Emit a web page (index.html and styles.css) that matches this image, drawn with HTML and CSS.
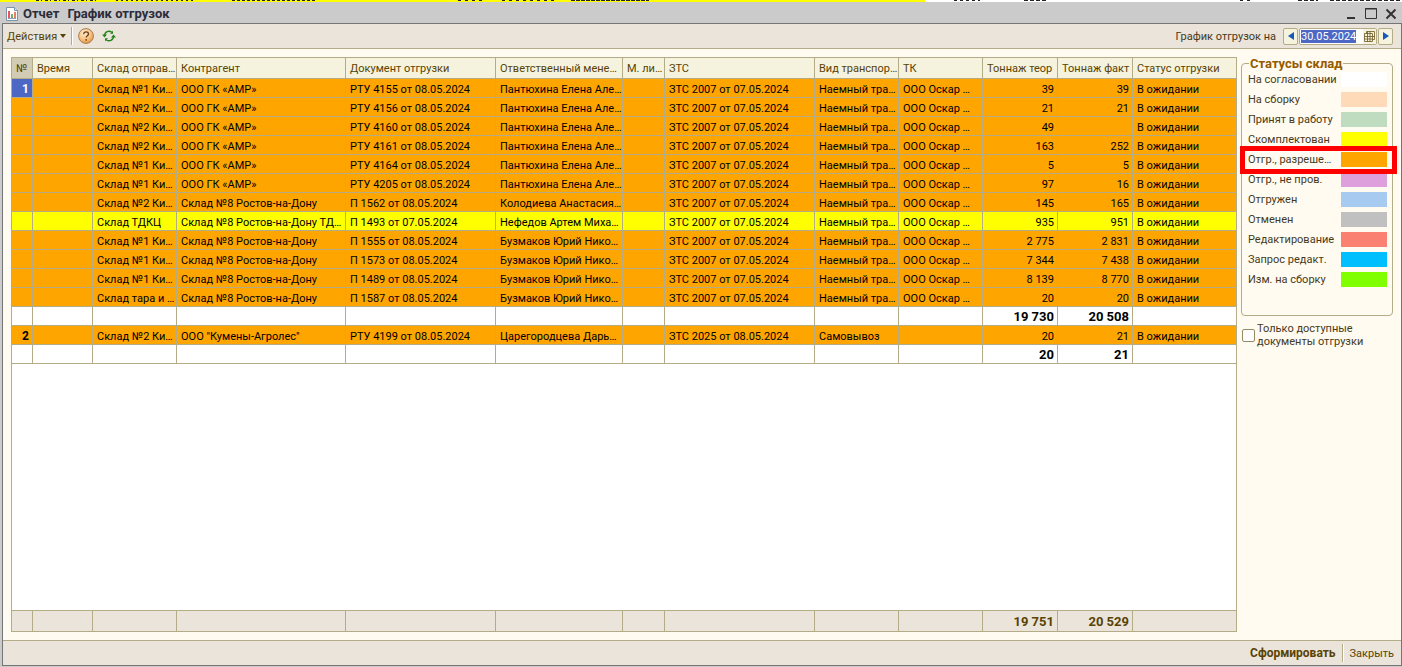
FILE: index.html
```html
<!DOCTYPE html>
<html lang="ru">
<head>
    <meta charset="UTF-8">
    <meta name="viewport" content="width=device-width, initial-scale=1.0">
    <title>Отчет График отгрузок</title>
    <link rel="stylesheet" href="styles.css">
</head>
<body>
    <div class="backdrop"></div>
    <header class="titlebar">
        <svg class="report-icon" width="12" height="14" viewBox="0 0 12 14">
            <path d="M.5.5h8l3 3v10H.5z" fill="#fff" stroke="#7d95a8"/>
            <path d="M8.500.5v3h3" fill="#dbe6ee" stroke="#7d95a8"/>
            <path d="M3 4v7" stroke="#e02020" stroke-width="1.500"/>
            <path d="M6 7v4" stroke="#3a9a3a" stroke-width="1.500"/>
            <path d="M9 5v6" stroke="#e05030" stroke-width="1.500"/>
            <path d="M2 11.500h8" stroke="#8fa0c0"/>
        </svg>
        <h1><span>Отчет</span> <span>График отгрузок</span></h1>
        <div class="window-buttons">
            <button type="button" aria-label="Свернуть"><svg width="12" height="12" viewBox="0 0 12 12"><path d="M2 10h8" stroke="#333" stroke-width="2"/></svg></button>
            <button type="button" aria-label="Развернуть"><svg width="12" height="12" viewBox="0 0 12 12"><path d="M.5.5h11v10H.5z" fill="none" stroke="#333"/><path d="M0 1h12" stroke="#333" stroke-width="1"/></svg></button>
            <button type="button" aria-label="Закрыть окно"><svg width="12" height="12" viewBox="0 0 12 12"><path d="M1.500 1.500l9 9M10.500 1.500l-9 9" stroke="#333" stroke-width="2"/></svg></button>
        </div>
    </header>
    <div class="window">
        <div class="toolbar">
            <button type="button" class="actions">Действия <svg width="6" height="4" viewBox="0 0 6 4"><path d="M0 0h6L3 4z" fill="#594304"/></svg></button>
            <span class="separator"></span>
            <button type="button" class="icon-button" aria-label="Справка">
                <svg width="16" height="16" viewBox="0 0 16 16">
                    <defs><radialGradient id="help" cx=".4" cy=".3" r=".8"><stop offset="0" stop-color="#fff0d8"/><stop offset=".6" stop-color="#f6bd78"/><stop offset="1" stop-color="#e08a30"/></radialGradient></defs>
                    <circle cx="8" cy="8" r="7.400" fill="url(#help)" stroke="#a67c50"/>
                    <path d="M5.700 6.300c0-3.200 4.800-3.200 4.800-.3 0 1.700-2.400 1.700-2.400 3.600M8.100 11v1.700" fill="none" stroke="#704010" stroke-width="1.300"/>
                </svg>
            </button>
            <button type="button" class="icon-button" aria-label="Обновить">
                <svg width="14" height="12" viewBox="0 0 14 12">
                    <path d="M2.500 6C2.500 1.500 7 .2 9.800 2.300M11.500 6c0 4.500-4.500 5.800-7.300 3.700" fill="none" stroke="#23831d" stroke-width="1.400"/>
                    <path d="M0 4.500h5L2.500 7.500zM9 7.500h5l-2.500-3zM8 3.800h3V.8zM6 8.200H3v3z" fill="#23831d"/>
                </svg>
            </button>
            <label class="date-label" for="date">График отгрузок на</label>
            <div class="date-picker">
                <button type="button" aria-label="Предыдущий день"><svg width="6" height="8" viewBox="0 0 6 8"><path d="M6 0v8L0 4z" fill="#1858b8"/></svg></button>
                <div class="date-field">
                    <input type="text" id="date" value="30.05.2024">
                    <button type="button" aria-label="Календарь"><svg width="11" height="11" viewBox="0 0 11 11"><path d="M2.500.5h8v8h-2M.5 2.500h8v8h-8zM.5 5.500h10M.5 8h8M3.500.5v10M6 .5v10M2.500.5v2" fill="none" stroke="#6b5720" stroke-width=".8"/></svg></button>
                </div>
                <button type="button" aria-label="Следующий день"><svg width="6" height="8" viewBox="0 0 6 8"><path d="M0 0v8l6-4z" fill="#1858b8"/></svg></button>
            </div>
        </div>
        <main class="content">
            <table class="report">
                <colgroup>
                    <col class="c-num"><col class="c-time"><col class="c-store"><col class="c-partner"><col class="c-doc"><col class="c-manager"><col class="c-sheet"><col class="c-zts"><col class="c-transport"><col class="c-tk"><col class="c-ton"><col class="c-ton"><col class="c-status">
                </colgroup>
                <thead>
                    <tr><th>№</th><th>Время</th><th>Склад отправ…</th><th>Контрагент</th><th>Документ отгрузки</th><th>Ответственный мене…</th><th>М. ли…</th><th>ЗТС</th><th>Вид транспор…</th><th>ТК</th><th>Тоннаж теор</th><th>Тоннаж факт</th><th>Статус отгрузки</th></tr>
                </thead>
                <tbody>
                    <tr class="allowed"><td class="selected">1</td><td></td><td>Склад №1 Ки…</td><td>ООО ГК «АМР»</td><td>РТУ 4155 от 08.05.2024</td><td>Пантюхина Елена Але…</td><td></td><td>ЗТС 2007 от 07.05.2024</td><td>Наемный тра…</td><td>ООО Оскар …</td><td>39</td><td>39</td><td>В ожидании</td></tr>
                    <tr class="allowed"><td></td><td></td><td>Склад №2 Ки…</td><td>ООО ГК «АМР»</td><td>РТУ 4156 от 08.05.2024</td><td>Пантюхина Елена Але…</td><td></td><td>ЗТС 2007 от 07.05.2024</td><td>Наемный тра…</td><td>ООО Оскар …</td><td>21</td><td>21</td><td>В ожидании</td></tr>
                    <tr class="allowed"><td></td><td></td><td>Склад №2 Ки…</td><td>ООО ГК «АМР»</td><td>РТУ 4160 от 08.05.2024</td><td>Пантюхина Елена Але…</td><td></td><td>ЗТС 2007 от 07.05.2024</td><td>Наемный тра…</td><td>ООО Оскар …</td><td>49</td><td></td><td>В ожидании</td></tr>
                    <tr class="allowed"><td></td><td></td><td>Склад №2 Ки…</td><td>ООО ГК «АМР»</td><td>РТУ 4161 от 08.05.2024</td><td>Пантюхина Елена Але…</td><td></td><td>ЗТС 2007 от 07.05.2024</td><td>Наемный тра…</td><td>ООО Оскар …</td><td>163</td><td>252</td><td>В ожидании</td></tr>
                    <tr class="allowed"><td></td><td></td><td>Склад №1 Ки…</td><td>ООО ГК «АМР»</td><td>РТУ 4164 от 08.05.2024</td><td>Пантюхина Елена Але…</td><td></td><td>ЗТС 2007 от 07.05.2024</td><td>Наемный тра…</td><td>ООО Оскар …</td><td>5</td><td>5</td><td>В ожидании</td></tr>
                    <tr class="allowed"><td></td><td></td><td>Склад №1 Ки…</td><td>ООО ГК «АМР»</td><td>РТУ 4205 от 08.05.2024</td><td>Пантюхина Елена Але…</td><td></td><td>ЗТС 2007 от 07.05.2024</td><td>Наемный тра…</td><td>ООО Оскар …</td><td>97</td><td>16</td><td>В ожидании</td></tr>
                    <tr class="allowed"><td></td><td></td><td>Склад №2 Ки…</td><td>Склад №8 Ростов-на-Дону</td><td>П 1562 от 08.05.2024</td><td>Колодиева Анастасия…</td><td></td><td>ЗТС 2007 от 07.05.2024</td><td>Наемный тра…</td><td>ООО Оскар …</td><td>145</td><td>165</td><td>В ожидании</td></tr>
                    <tr class="complete"><td></td><td></td><td>Склад ТДКЦ</td><td>Склад №8 Ростов-на-Дону ТД…</td><td>П 1493 от 07.05.2024</td><td>Нефедов Артем Миха…</td><td></td><td>ЗТС 2007 от 07.05.2024</td><td>Наемный тра…</td><td>ООО Оскар …</td><td>935</td><td>951</td><td>В ожидании</td></tr>
                    <tr class="allowed"><td></td><td></td><td>Склад №1 Ки…</td><td>Склад №8 Ростов-на-Дону</td><td>П 1555 от 08.05.2024</td><td>Бузмаков Юрий Нико…</td><td></td><td>ЗТС 2007 от 07.05.2024</td><td>Наемный тра…</td><td>ООО Оскар …</td><td>2 775</td><td>2 831</td><td>В ожидании</td></tr>
                    <tr class="allowed"><td></td><td></td><td>Склад №1 Ки…</td><td>Склад №8 Ростов-на-Дону</td><td>П 1573 от 08.05.2024</td><td>Бузмаков Юрий Нико…</td><td></td><td>ЗТС 2007 от 07.05.2024</td><td>Наемный тра…</td><td>ООО Оскар …</td><td>7 344</td><td>7 438</td><td>В ожидании</td></tr>
                    <tr class="allowed"><td></td><td></td><td>Склад №1 Ки…</td><td>Склад №8 Ростов-на-Дону</td><td>П 1489 от 08.05.2024</td><td>Бузмаков Юрий Нико…</td><td></td><td>ЗТС 2007 от 07.05.2024</td><td>Наемный тра…</td><td>ООО Оскар …</td><td>8 139</td><td>8 770</td><td>В ожидании</td></tr>
                    <tr class="allowed"><td></td><td></td><td>Склад тара и …</td><td>Склад №8 Ростов-на-Дону</td><td>П 1587 от 08.05.2024</td><td>Бузмаков Юрий Нико…</td><td></td><td>ЗТС 2007 от 07.05.2024</td><td>Наемный тра…</td><td>ООО Оскар …</td><td>20</td><td>20</td><td>В ожидании</td></tr>
                    <tr class="subtotal"><td></td><td></td><td></td><td></td><td></td><td></td><td></td><td></td><td></td><td></td><td>19 730</td><td>20 508</td><td></td></tr>
                    <tr class="allowed"><td>2</td><td></td><td>Склад №2 Ки…</td><td>ООО "Кумены-Агролес"</td><td>РТУ 4199 от 08.05.2024</td><td>Царегородцева Дарь…</td><td></td><td>ЗТС 2025 от 08.05.2024</td><td>Самовывоз</td><td></td><td>20</td><td>21</td><td>В ожидании</td></tr>
                    <tr class="subtotal"><td></td><td></td><td></td><td></td><td></td><td></td><td></td><td></td><td></td><td></td><td>20</td><td>21</td><td></td></tr>
                    <tr class="filler"><td colspan="13"></td></tr>
                </tbody>
                <tfoot>
                    <tr><td></td><td></td><td></td><td></td><td></td><td></td><td></td><td></td><td></td><td></td><td>19 751</td><td>20 529</td><td></td></tr>
                </tfoot>
            </table>
            <aside class="side">
                <fieldset class="statuses">
                    <legend>Статусы склад</legend>
                    <ul>
                        <li>На согласовании<span class="swatch agree"></span></li>
                        <li>На сборку<span class="swatch assembly"></span></li>
                        <li>Принят в работу<span class="swatch accepted"></span></li>
                        <li>Скомплектован<span class="swatch complete"></span></li>
                        <li class="marked">Отгр., разреше…<span class="swatch allowed"></span></li>
                        <li>Отгр., не пров.<span class="swatch unposted"></span></li>
                        <li>Отгружен<span class="swatch shipped"></span></li>
                        <li>Отменен<span class="swatch cancelled"></span></li>
                        <li>Редактирование<span class="swatch editing"></span></li>
                        <li>Запрос редакт.<span class="swatch request"></span></li>
                        <li>Изм. на сборку<span class="swatch changed"></span></li>
                    </ul>
                </fieldset>
                <div class="only-available">
                    <input type="checkbox" id="available">
                    <label for="available">Только доступные документы отгрузки</label>
                </div>
            </aside>
        </main>
        <footer class="commands">
            <button type="button" class="primary">Сформировать</button>
            <span class="separator"></span>
            <button type="button">Закрыть</button>
        </footer>
    </div>
</body>
</html>
```
FILE: styles.css
```css
* {
    box-sizing: border-box;
}
body {
    margin: 0;
    min-height: 100vh;
    display: flex;
    flex-direction: column;
    background: #cbcbcb;
    font-family: Roboto, "Liberation Sans", sans-serif;
    font-size: 11px;
    line-height: 13px;
    color: #46391a;
}
button {
    display: flex;
    align-items: center;
    justify-content: center;
    margin: 0;
    padding: 0;
    border: 0;
    background: none;
    font: inherit;
    color: #594304;
}

/* edge of the window behind */
.backdrop {
    height: 2px;
    background:
        repeating-linear-gradient(90deg, #222 0 3px, transparent 3px 5px, #222 5px 6px, transparent 6px 9px) 36px 0 / 60px 1px no-repeat,
        repeating-linear-gradient(90deg, #222 0 2px, transparent 2px 5px) 116px 0 / 78px 1px no-repeat,
        repeating-linear-gradient(90deg, #222 0 3px, transparent 3px 5px) 232px 0 / 84px 1px no-repeat,
        repeating-linear-gradient(90deg, #222 0 3px, transparent 3px 7px) 458px 0 / 26px 1px no-repeat,
        repeating-linear-gradient(90deg, #222 0 3px, transparent 3px 7px) 502px 0 / 54px 1px no-repeat,
        repeating-linear-gradient(90deg, #222 0 4px, transparent 4px 5px) 571px 0 / 78px 1px no-repeat,
        repeating-linear-gradient(90deg, #222 0 3px, transparent 3px 6px) 954px 0 / 26px 1px no-repeat,
        repeating-linear-gradient(90deg, #222 0 4px, transparent 4px 6px) 1024px 0 / 22px 1px no-repeat,
        repeating-linear-gradient(90deg, #222 0 3px, transparent 3px 7px) 1240px 0 / 14px 1px no-repeat,
        repeating-linear-gradient(90deg, #222 0 4px, transparent 4px 6px) 1298px 0 / 20px 1px no-repeat,
        repeating-linear-gradient(90deg, #222 0 4px, transparent 4px 6px) 1330px 0 / 72px 1px no-repeat,
        linear-gradient(90deg, #ff0 66%, #fff 66%);
}

.titlebar {
    display: flex;
    align-items: center;
    height: 21px;
    padding: 2px 5px 0 6px;
}
.titlebar h1 {
    display: flex;
    gap: 8px;
    margin: 0 auto 0 5px;
    font-size: 13px;
    line-height: 16px;
    color: #2b2b3a;
}
.window-buttons {
    display: flex;
    gap: 8px;
}

.window {
    flex: 1;
    display: flex;
    flex-direction: column;
    margin: 0 0 1px 2px;
    border: 1px solid #757575;
    background: #fffbf0;
}
.toolbar {
    display: flex;
    align-items: center;
    height: 25px;
    padding: 0 8px 0 4px;
    background: #ebe4da;
    border-bottom: 1px solid #b3ac86;
}
.actions {
    gap: 3px;
}
.separator {
    width: 2px;
    height: 18px;
    margin: 0 6px;
    border-left: 1px solid #b3ac86;
    background: #fff;
}
.toolbar .separator {
    margin: 0 5px;
}
.icon-button {
    margin-right: 8px;
}
.date-label {
    margin-left: auto;
}
.date-picker {
    display: flex;
    gap: 1px;
    margin-left: 7px;
}
.date-picker > button {
    width: 15px;
    height: 17px;
    border: 1px solid #b3ac86;
    border-radius: 2px;
    background: #f5f2dd;
}
.date-field {
    display: flex;
    align-items: center;
    height: 17px;
    padding-left: 1px;
    border: 1px solid #b3ac86;
    border-radius: 2px;
    background: #fff;
}
.date-field input {
    width: 55px;
    height: 13px;
    margin-right: 7px;
    padding: 0;
    border: 0;
    outline: 0;
    background: #4d68c4;
    color: #fff;
    font: inherit;
}
.date-field button {
    width: 13px;
    height: 15px;
    background: #f5f2dd;
}

.content {
    flex: 1;
    display: flex;
    gap: 4px;
    padding: 8px 4px 8px 8px;
}
.report {
    flex: 1;
    width: 100%;
    table-layout: fixed;
    border-spacing: 0;
    border-top: 1px solid #b3ac86;
    border-left: 1px solid #b3ac86;
    background: #fff;
    color: #000;
    white-space: nowrap;
}
.c-num { width: 21px; }
.c-time { width: 60px; }
.c-store, .c-transport, .c-tk { width: 84px; }
.c-doc, .c-zts { width: 150px; }
.c-manager { width: 127px; }
.c-sheet { width: 42px; }
.c-ton { width: 75px; }
.c-status { width: 104px; }
.report th,
.report td {
    height: 19px;
    padding: 2px 3px 0 4px;
    border-right: 1px solid #b3ac86;
    border-bottom: 1px solid #b3ac86;
    overflow: hidden;
}
.report th {
    height: 21px;
    padding: 0 0 0 4px;
    background: #f5f2dd;
    color: #594304;
    font-weight: normal;
    text-align: left;
}
.report th:first-child {
    background: #d2ccb4;
}
.report td:first-child {
    font-size: 12px;
    font-weight: bold;
    text-align: right;
}
.report td:nth-child(11),
.report td:nth-child(12) {
    text-align: right;
}
.report .allowed td {
    background: #ffa500;
}
.report .complete td {
    background: #ff0;
}
.report .allowed .selected {
    background: #4d68c4;
    color: #fff;
}
.report .subtotal td,
.report tfoot td {
    padding-top: 0;
    font-size: 13px;
    font-weight: bold;
}
.report .filler td {
    height: auto;
}
.report tfoot td {
    height: 21px;
    background: #ebe4da;
    color: #594304;
}

.side {
    flex: none;
    width: 156px;
}
.statuses {
    height: 259px;
    min-width: 0;
    margin: 0 4px 0 0;
    padding: 0 5px 0 6px;
    border: 1px solid #b3ac86;
    border-radius: 4px;
}
.statuses legend {
    margin-left: 1px;
    padding: 0 1px;
    font-size: 13px;
    font-weight: bold;
    color: #965a00;
}
.statuses ul {
    margin: -1px 0 0;
    padding: 0;
    list-style: none;
}
.statuses li {
    position: relative;
    display: flex;
    align-items: center;
    justify-content: space-between;
    height: 20px;
    white-space: nowrap;
}
.swatch {
    width: 46px;
    height: 15px;
}
.swatch.agree { background: #fff; }
.swatch.assembly { background: #ffdab9; }
.swatch.accepted { background: #c0dcc0; }
.swatch.complete { background: #ff0; }
.swatch.allowed { background: #ffa500; }
.swatch.unposted { background: #dda0dd; }
.swatch.shipped { background: #a6caf0; }
.swatch.cancelled { background: #c0c0c0; }
.swatch.editing { background: #fa8072; }
.swatch.request { background: #00bfff; }
.swatch.changed { background: #7fff00; }
.marked::after {
    content: "";
    position: absolute;
    z-index: 1;
    inset: -3px -10px -5px -8px;
    border: 5px solid #fe0000;
}
.only-available {
    display: flex;
    align-items: center;
    gap: 2px;
    margin-top: 6px;
}
.only-available input {
    appearance: none;
    flex: none;
    width: 13px;
    height: 13px;
    margin: 0 0 0 1px;
    border: 1px solid #968c64;
    border-radius: 2px;
    background: #fff;
}

.commands {
    display: flex;
    align-items: center;
    justify-content: flex-end;
    height: 25px;
    padding-right: 7px;
    background: #ebe4da;
    border-top: 1px solid #b3ac86;
}
.commands .primary {
    font-size: 12px;
    font-weight: bold;
}
```
